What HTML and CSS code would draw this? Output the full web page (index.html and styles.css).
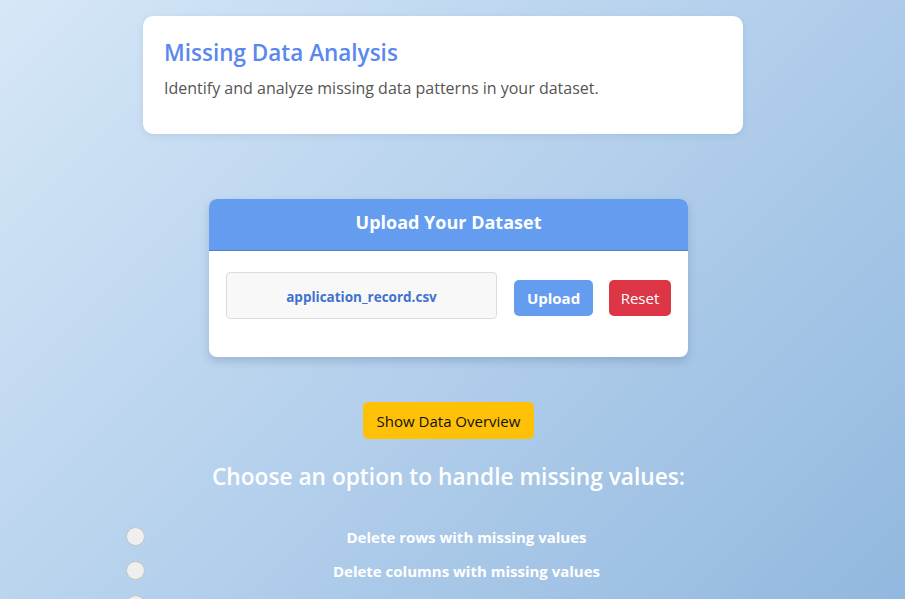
FILE: index.html
```html
<!DOCTYPE html>
<html lang="en">
<head>
<meta charset="utf-8">
<title>Missing Data Analysis</title>
<link rel="stylesheet" href="styles.css">
</head>
<body>
<div class="page">
  <header class="intro-card">
    <h1 class="intro-title">Missing Data Analysis</h1>
    <p class="intro-text">Identify and analyze missing data patterns in your dataset.</p>
  </header>

  <section class="upload-card">
    <div class="upload-head">Upload Your Dataset</div>
    <div class="upload-body">
      <div class="file-box">application_record.csv</div>
      <button class="btn btn-upload">Upload</button>
      <button class="btn btn-reset">Reset</button>
    </div>
  </section>

  <div class="overview-row">
    <button class="btn btn-overview">Show Data Overview</button>
  </div>

  <h2 class="options-title">Choose an option to handle missing values:</h2>

  <div class="options">
    <label class="option"><span class="radio"></span><span class="option-text">Delete rows with missing values</span></label>
    <label class="option"><span class="radio"></span><span class="option-text">Delete columns with missing values</span></label>
    <label class="option" aria-label="Fill missing values"><span class="radio"></span><span class="option-text"></span></label>
  </div>
</div>
</body>
</html>
```

FILE: styles.css
```css
html, body {
  margin: 0;
  padding: 0;
}
body {
  font-family: "Open Sans", "Noto Sans", "Liberation Sans", sans-serif;
  background: linear-gradient(135deg, #d6e7f7 0%, #b4d0ec 50%, #92b8df 100%);
  background-attachment: fixed;
  min-height: 100vh;
  overflow: hidden;
}
.page {
  width: 897px;
  padding-top: 16px;
}
.intro-card {
  box-sizing: border-box;
  width: 600px;
  height: 118px;
  margin-left: 143px;
  background: #fff;
  border-radius: 10px;
  padding: 23px 21px 22px;
  box-shadow: 0 2px 6px rgba(60, 100, 150, 0.12);
}
.intro-title {
  margin: 0;
  font-size: 22.5px;
  font-weight: 600;
  line-height: 28px;
  color: #5a88ee;
}
.intro-text {
  margin: 10px 0 0;
  font-size: 16px;
  line-height: 22px;
  color: #555;
}
.upload-card {
  width: 479px;
  margin: 65px auto 0;
  background: #fff;
  border-radius: 8px;
  overflow: hidden;
  box-shadow: 0 4px 10px rgba(40, 70, 110, 0.22);
}
.upload-head {
  height: 51px;
  background: #649cef;
  border-bottom: 1px solid #4a7fd0;
  color: #fff;
  font-weight: 700;
  font-size: 18px;
  line-height: 46px;
  text-align: center;
}
.upload-body {
  display: flex;
  align-items: flex-start;
  gap: 16px;
  padding: 21px 17px 38px;
}
.file-box {
  box-sizing: border-box;
  width: 271px;
  height: 47px;
  margin-right: 1px;
  padding-top: 3px;
  background: #f8f8f8;
  border: 1px solid #dcdcdc;
  border-radius: 4px;
  color: #3f72cf;
  font-weight: 700;
  font-size: 13.5px;
  display: flex;
  align-items: center;
  justify-content: center;
}
.btn {
  font-family: inherit;
  border: none;
  border-radius: 5px;
  cursor: pointer;
  padding: 0;
}
.btn-upload,
.btn-reset {
  margin-top: 8px;
  height: 36px;
  color: #fff;
  font-size: 15px;
}
.btn-upload {
  width: 79px;
  background: #649cef;
  font-weight: 700;
}
.btn-reset {
  width: 62px;
  background: #dc3545;
}
.overview-row {
  display: flex;
  justify-content: center;
  margin-top: 45px;
}
.btn-overview {
  width: 171px;
  height: 37px;
  background: #ffc107;
  color: #111;
  font-size: 15px;
}
.options-title {
  margin: 23px 0 0;
  text-align: center;
  color: #fff;
  font-size: 22.7px;
  font-weight: 600;
  line-height: 30px;
}
.options {
  margin: 34px 0 0 126px;
  width: 660px;
  display: flex;
  flex-direction: column;
  gap: 14px;
}
.option {
  display: flex;
  align-items: center;
  gap: 2px;
  height: 20px;
}
.radio {
  box-sizing: border-box;
  flex: none;
  width: 19px;
  height: 19px;
  border-radius: 50%;
  background: #efefef;
  border: 1.5px solid #c4c4c4;
}
.option-text {
  flex: 1;
  text-align: center;
  color: #fff;
  font-weight: 700;
  font-size: 15px;
  position: relative;
  top: 1px;
}
```
